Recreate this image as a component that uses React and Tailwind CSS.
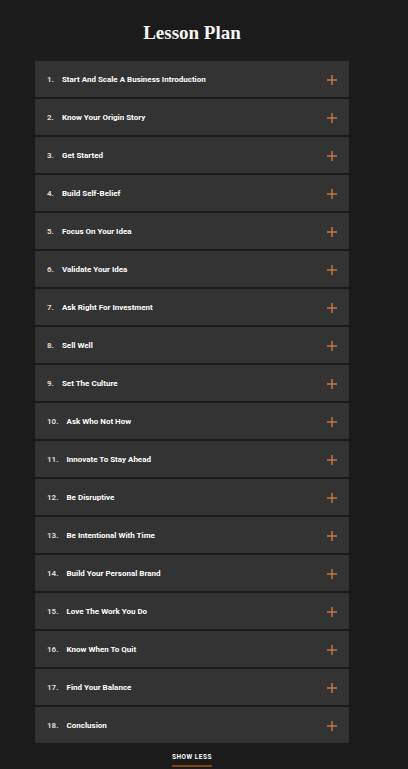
import React from "react";

const lessons = [
  "Start And Scale A Business Introduction",
  "Know Your Origin Story",
  "Get Started",
  "Build Self-Belief",
  "Focus On Your Idea",
  "Validate Your Idea",
  "Ask Right For Investment",
  "Sell Well",
  "Set The Culture",
  "Ask Who Not How",
  "Innovate To Stay Ahead",
  "Be Disruptive",
  "Be Intentional With Time",
  "Build Your Personal Brand",
  "Love The Work You Do",
  "Know When To Quit",
  "Find Your Balance",
  "Conclusion",
];

function Plus() {
  return (
    <svg width="10" height="10" viewBox="0 0 10 10" className="shrink-0">
      <path d="M5 0v10M0 5h10" stroke="#c8773f" strokeWidth="1.5" />
    </svg>
  );
}

export default function App() {
  return (
    <div className="min-h-[769px] w-[408px] bg-[#1b1b1b] font-['Roboto',sans-serif]">
      <div className="ml-[35px] flex w-[314px] flex-col">
        <h2 className="pt-[19px] text-center font-['Liberation_Serif',serif] text-[19px] font-bold leading-[28px] text-[#f4f4f4]">
          Lesson Plan
        </h2>
        <div className="mt-[14px] flex flex-col gap-[2px]">
          {lessons.map((title, i) => (
            <div key={title} className="flex h-[36px] items-center bg-[#333333] pl-[12px] pr-[12px] pt-[1px]">
              <span className="text-[8px] font-bold text-[#d9d9d9]">{i + 1}.</span>
              <span className="ml-[8px] flex-1 text-[8px] font-bold text-white">{title}</span>
              <Plus />
            </div>
          ))}
        </div>
        <div className="mt-[10px] flex justify-center">
          <span className="border-b-2 border-[#7e4214] pb-[2px] text-[6.5px] font-bold uppercase tracking-[0.5px] text-white">
            Show less
          </span>
        </div>
      </div>
    </div>
  );
}
